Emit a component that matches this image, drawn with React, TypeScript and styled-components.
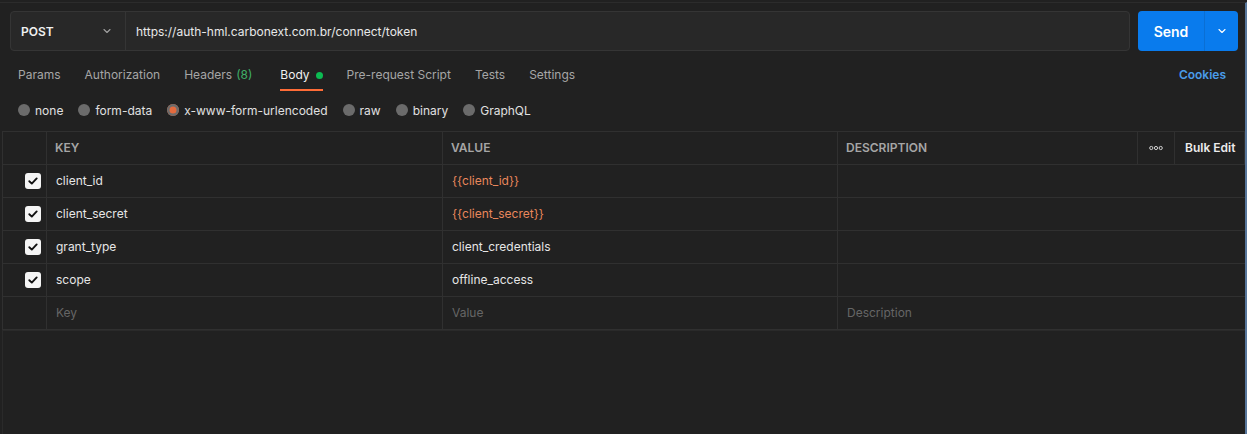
import React from "react";
import styled, { createGlobalStyle } from "styled-components";

const Global = createGlobalStyle`
  html, body { margin: 0; padding: 0; background: #212121; }
  body { font-family: Inter, "Noto Sans", "Liberation Sans", sans-serif; -webkit-font-smoothing: antialiased; }
  * { box-sizing: border-box; }
`;

const Page = styled.div`
  width: 1247px;
  height: 434px;
  background: #212121;
  border-top: 1px solid #2c2c2c;
  margin-top: 2px;
  border-right: 2px solid #58779c;
  display: flex;
  flex-direction: column;
  overflow: hidden;
  color: #e6e6e6;
  font-size: 12px;
`;

const RequestBar = styled.div`
  display: flex;
  gap: 8px;
  padding: 8px 7px 0 10px;
  height: 48px;
`;

const UrlBox = styled.div`
  flex: 1;
  display: flex;
  background: #282828;
  border: 1px solid #353535;
  border-radius: 4px;
  height: 40px;
`;

const Method = styled.div`
  width: 115px;
  display: flex;
  align-items: center;
  justify-content: space-between;
  padding: 0 13px 0 10px;
  border-right: 1px solid #353535;
  font-weight: 600;
  color: #f0f0f0;
  font-size: 12px;
`;

const Url = styled.div`
  display: flex;
  align-items: center;
  padding-left: 10px;
  color: #e8e8e8;
  font-size: 12px;
`;

const SendButton = styled.div`
  width: 100px;
  height: 40px;
  display: flex;
  background: #097bed;
  border-radius: 4px;
  color: #fff;
`;

const SendLabel = styled.div`
  width: 67px;
  display: flex;
  align-items: center;
  justify-content: center;
  font-weight: 600;
  font-size: 14px;
  border-right: 1px solid #0a6fd4;
`;

const SendArrow = styled.div`
  flex: 1;
  display: flex;
  align-items: center;
  justify-content: center;
`;

const Tabs = styled.div`
  display: flex;
  align-items: stretch;
  height: 33px;
  padding: 0 19px 0 18px;
  margin-top: 7px;
`;

const Tab = styled.div<{ $active?: boolean }>`
  display: flex;
  align-items: center;
  margin-right: 24px;
  color: ${(p) => (p.$active ? "#f0f0f0" : "#a6a6a6")};
  border-bottom: 2px solid ${(p) => (p.$active ? "#ff6c37" : "transparent")};
  border-top: 2px solid transparent;
  font-size: 12px;
`;

const Count = styled.span`
  color: #3fae67;
  margin-left: 4px;
  margin-right: 4px;
`;

const Dot = styled.span`
  width: 7px;
  height: 7px;
  border-radius: 50%;
  background: #0cbb52;
  margin-left: 6px;
  margin-top: 1px;
`;

const Spacer = styled.div`
  flex: 1;
`;

const Cookies = styled.div`
  display: flex;
  align-items: center;
  color: #4a9ce9;
  font-weight: 600;
  font-size: 12px;
`;

const Radios = styled.div`
  display: flex;
  align-items: center;
  gap: 15px;
  padding-left: 18px;
  height: 38px;
  margin-bottom: 2px;
`;

const RadioItem = styled.label`
  display: flex;
  align-items: center;
  gap: 5px;
  color: #e0e0e0;
  font-size: 12px;
`;

const RadioCircle = styled.span<{ $on?: boolean }>`
  width: 12px;
  height: 12px;
  border-radius: 50%;
  background: ${(p) => (p.$on ? "#e46a3d" : "#6b6b6b")};
  box-shadow: ${(p) => (p.$on ? "inset 0 0 0 2.5px #6b6b6b" : "none")};
`;

const Table = styled.div`
  margin-left: 2px;
  border-top: 1px solid #303030;
  border-left: 1px solid #303030;
  display: grid;
  grid-template-columns: 44px 396px 395px 300px 37px 1fr;
`;

const HeadCell = styled.div<{ $center?: boolean; $strong?: boolean }>`
  height: 33px;
  display: flex;
  align-items: center;
  justify-content: ${(p) => (p.$center ? "center" : "flex-start")};
  padding-left: ${(p) => (p.$center ? "0" : p.$strong ? "10px" : "8px")};
  padding-bottom: 1px;
  border-bottom: 1px solid #303030;
  border-right: 1px solid #303030;
  color: ${(p) => (p.$strong ? "#ececec" : "#a6a6a6")};
  font-weight: 600;
  font-size: 12px;
  &:last-child { border-right: none; }
`;

const Cell = styled.div<{ $span?: number; $tone?: "var" | "ph" | "text" }>`
  height: 33px;
  display: flex;
  align-items: center;
  justify-content: flex-start;
  padding-left: 9px;
  padding-bottom: 1px;
  grid-column: ${(p) => (p.$span ? `span ${p.$span}` : "auto")};
  border-bottom: 1px solid #303030;
  border-right: ${(p) => (p.$span ? "none" : "1px solid #303030")};
  color: ${(p) =>
    p.$tone === "var" ? "#e8875c" : p.$tone === "ph" ? "#666666" : "#e6e6e6"};
  font-size: 12px;
`;

const CheckCell = styled.div`
  height: 33px;
  display: flex;
  align-items: center;
  justify-content: flex-start;
  padding-left: 22px;
  border-bottom: 1px solid #303030;
  border-right: 1px solid #303030;
`;

const Checkbox = styled.span`
  width: 16px;
  height: 16px;
  border-radius: 3px;
  background: #f5f5f5;
  display: flex;
  align-items: center;
  justify-content: center;
`;

const Rest = styled.div`
  flex: 1;
  margin-left: 2px;
  border-left: 1px solid #2a2a2a;
  border-top: 1px solid #2a2a2a;
`;

const Chevron = ({ color }: { color: string }) => (
  <svg width="10" height="10" viewBox="0 0 10 10" fill="none">
    <path d="M2 3.5 L5 6.5 L8 3.5" stroke={color} strokeWidth="1.1" strokeLinecap="round" strokeLinejoin="round" />
  </svg>
);

const Check = () => (
  <svg width="12" height="12" viewBox="0 0 12 12" fill="none">
    <path d="M2.3 6.2 L4.8 8.6 L9.7 3.4" stroke="#111" strokeWidth="1.9" strokeLinecap="round" strokeLinejoin="round" />
  </svg>
);

const Dots = () => (
  <svg width="14" height="6" viewBox="0 0 14 6" fill="none">
    <circle cx="2.3" cy="3" r="1.6" stroke="#d0d0d0" strokeWidth="1" />
    <circle cx="7" cy="3" r="1.6" stroke="#d0d0d0" strokeWidth="1" />
    <circle cx="11.7" cy="3" r="1.6" stroke="#d0d0d0" strokeWidth="1" />
  </svg>
);

const rows: { key: string; value: string; isVar: boolean }[] = [
  { key: "client_id", value: "{{client_id}}", isVar: true },
  { key: "client_secret", value: "{{client_secret}}", isVar: true },
  { key: "grant_type", value: "client_credentials", isVar: false },
  { key: "scope", value: "offline_access", isVar: false },
];

const radios = ["none", "form-data", "x-www-form-urlencoded", "raw", "binary", "GraphQL"];

export default function App() {
  return (
    <>
      <Global />
      <Page>
        <RequestBar>
          <UrlBox>
            <Method>
              POST
              <Chevron color="#a0a0a0" />
            </Method>
            <Url>https://auth-hml.carbonext.com.br/connect/token</Url>
          </UrlBox>
          <SendButton>
            <SendLabel>Send</SendLabel>
            <SendArrow>
              <Chevron color="#ffffff" />
            </SendArrow>
          </SendButton>
        </RequestBar>
        <Tabs>
          <Tab>Params</Tab>
          <Tab>Authorization</Tab>
          <Tab>
            Headers<Count>(8)</Count>
          </Tab>
          <Tab $active>
            Body<Dot />
          </Tab>
          <Tab>Pre-request Script</Tab>
          <Tab>Tests</Tab>
          <Tab>Settings</Tab>
          <Spacer />
          <Cookies>Cookies</Cookies>
        </Tabs>
        <Radios>
          {radios.map((r) => (
            <RadioItem key={r}>
              <RadioCircle $on={r === "x-www-form-urlencoded"} />
              {r}
            </RadioItem>
          ))}
        </Radios>
        <Table>
          <HeadCell />
          <HeadCell>KEY</HeadCell>
          <HeadCell>VALUE</HeadCell>
          <HeadCell>DESCRIPTION</HeadCell>
          <HeadCell $center>
            <Dots />
          </HeadCell>
          <HeadCell $strong>Bulk Edit</HeadCell>
          {rows.map((r) => (
            <React.Fragment key={r.key}>
              <CheckCell>
                <Checkbox>
                  <Check />
                </Checkbox>
              </CheckCell>
              <Cell>{r.key}</Cell>
              <Cell $tone={r.isVar ? "var" : "text"}>{r.value}</Cell>
              <Cell $span={3} />
            </React.Fragment>
          ))}
          <CheckCell />
          <Cell $tone="ph">Key</Cell>
          <Cell $tone="ph">Value</Cell>
          <Cell $tone="ph" $span={3}>Description</Cell>
        </Table>
        <Rest />
      </Page>
    </>
  );
}
